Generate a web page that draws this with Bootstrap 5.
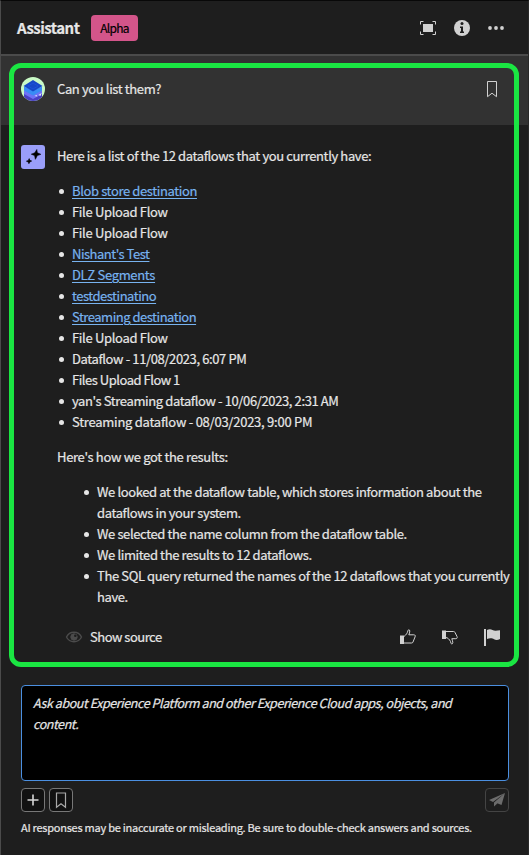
<!DOCTYPE html>
<html lang="en" data-bs-theme="dark">
<head>
<meta charset="utf-8">
<meta name="viewport" content="width=device-width, initial-scale=1">
<title>Assistant</title>
<link href="https://cdn.jsdelivr.net/npm/bootstrap@5.3.0/dist/css/bootstrap.min.css" rel="stylesheet">
<style>
body{background:#1e1e1e;color:#e6e6e6;font:13px/21px "Noto Sans CJK SC","Noto Sans",sans-serif;letter-spacing:-.38px;-webkit-text-stroke:.2px;overflow:hidden}
.panel{height:855px;border-left:1px solid #4b4b4b;border-top:1px solid #080808;border-right:1px solid #292929}
.topbar{height:55px;border-bottom:2px solid #4b4b4b;padding:0 23px 0 16px}
.title{font-size:15px;font-weight:700;letter-spacing:-.52px;width:74px}
.alpha{width:47px;height:26px;border-radius:4px;background:#d3558a;color:#000;font-size:12px;letter-spacing:-.75px}
.ask{height:69px;background:#323232;padding:21px 30px 0 20px}
.ask-text{padding-top:1px}
.reply{padding:20px 0 0 20px;height:493px}
.bot{width:24px;height:24px;border-radius:3px;background:#9a9ef9}
.ic{fill:#d1d1d1;display:block}
.frame{left:8px;top:62px;width:510px;height:604px;border:5px solid #1ae642;border-radius:12px;pointer-events:none}
.items,.steps{list-style:none}
.items li::before,.steps li::before{content:"";display:inline-block;width:5px;height:5px;border-radius:50%;background:#e6e6e6;margin:0 8px 2px -13px}
.items{padding-left:15px;margin:14px 0}
.steps{padding-left:40px;margin:14px 0 0}
.items a{color:#78b3f0;text-decoration-thickness:1px;text-underline-offset:2px}
.tight{letter-spacing:-.48px}
.loose{letter-spacing:-.32px}
.looser{letter-spacing:-.25px}
.actions{margin:19px 27px 0 8px}
.show-source{letter-spacing:-.5px;padding-left:7px}
.prompt-box{margin:67px 19px 0 20px;height:96px;background:#000;border:1px solid #4b8fe0;border-radius:4px;padding:6px 11px;font-size:12.5px;font-style:italic;letter-spacing:-.42px}
.tools{margin:7px 19px 0 20px;gap:4px}
.tool{width:24px;height:24px;border:1px solid #777;border-radius:4px;background:#111}
.tool.off{border-color:#444;background:#1e1e1e}
.note{font-size:11px;line-height:16px;margin:7px 0 0 20px;letter-spacing:-.25px}
</style>
</head>
<body>
<main class="panel position-relative">
<header class="topbar d-flex align-items-center">
<span class="title text-nowrap">Assistant</span><span class="alpha d-flex align-items-center justify-content-center">Alpha</span>
<div class="ms-auto d-flex align-items-center gap-3">
<svg class="ic" width="18" height="18" viewBox="0 0 18 18"><path d="M4 5h10v8H4z"/><path d="M1.500 5.500v-3h3m9 0h3v3m0 7v3h-3m-9 0h-3v-3" fill="none" stroke="#d1d1d1"/></svg>
<svg class="ic" width="18" height="18" viewBox="0 0 18 18"><circle cx="9" cy="9" r="8"/><circle cx="9" cy="4.600" r="1.500" fill="#1e1e1e"/><path d="M7 7.500h3v5h1V14H7v-1.500h1V9H7z" fill="#1e1e1e"/></svg>
<svg class="ic" width="18" height="18" viewBox="0 0 18 18"><circle cx="3" cy="9" r="1.900"/><circle cx="9" cy="9" r="1.900"/><circle cx="15" cy="9" r="1.900"/></svg>
</div>
</header>
<section class="ask d-flex align-items-start">
<svg width="24" height="24" viewBox="0 0 24 24"><defs><clipPath id="av"><circle cx="12" cy="12" r="12"/></clipPath></defs><g clip-path="url(#av)"><path fill="#c9fac6" d="M0 0h24v24H0z"/><path fill="#4a3fc4" d="M3 14h18v6l-3 4H6l-3-4z"/><path fill="#6e72f6" d="M3 13l9 4 9-4v4l-9 5-9-5z"/><path fill="#388cf5" d="M3 9.500l9 4 9-4v4l-9 5-9-5z"/><path fill="#1648c8" d="M12 3l9.500 6L12 14.500 2.500 9z"/><path fill="none" stroke="#1c58df" stroke-width=".7" d="M7 9l5-3 5 3-5 3z"/><path fill="#e1e9ff" d="M13.500 19l2-1 1 1.500zm4-1 3-2-1 3z"/></g></svg>
<span class="ask-text text-nowrap ms-2 ps-1"><span class="d-block">Can you list them?</span></span>
<svg class="ic ms-auto mt-1" width="12" height="18" viewBox="0 0 12 18"><path d="M1.500.5h9v15.200L6 12.200l-4.500 3.500z" fill="none" stroke="#d1d1d1"/></svg>
</section>
<section class="reply d-flex align-items-start">
<span class="bot flex-shrink-0"><svg class="d-block" width="24" height="24" viewBox="0 0 24 24"><path stroke="#000" stroke-width=".6" stroke-linejoin="round" d="M15.800 4.500l.5 3.300 3.500 1.500-3.500 1.300-1.900 3.700-.8-3.800-3.300-1.300 3.600-1.400zM8.200 13.600l.6 1.700 1.900.7-1.800.9-1 1.800-.7-1.800-1.800-.7 1.900-.8z"/></svg></span>
<div class="ms-2 ps-1 flex-grow-1 text-nowrap">
<div>Here is a list of the 12 dataflows that you currently have:</div>
<ul class="items">
<li><a href="#">Blob store destination</a></li>
<li class="loose">File Upload Flow</li>
<li class="loose">File Upload Flow</li>
<li class="tight"><a href="#">Nishant's Test</a></li>
<li class="loose"><a href="#">DLZ Segments</a></li>
<li class="tight"><a href="#">testdestinatino</a></li>
<li class="tight"><a href="#">Streaming destination</a></li>
<li class="loose">File Upload Flow</li>
<li>Dataflow - 11/08/2023, 6:07 PM</li>
<li class="tight">Files Upload Flow 1</li>
<li>yan's Streaming dataflow - 10/06/2023, 2:31 AM</li>
<li class="looser">Streaming dataflow - 08/03/2023, 9:00 PM</li>
</ul>
<div class="loose">Here's how we got the results:</div>
<ul class="steps">
<li>We looked at the dataflow table, which stores information about the<br>dataflows in your system.</li>
<li>We selected the name column from the dataflow table.</li>
<li>We limited the results to 12 dataflows.</li>
<li>The SQL query returned the names of the 12 dataflows that you currently<br>have.</li>
</ul>
<div class="actions d-flex align-items-center">
<svg width="18" height="18" viewBox="0 0 18 18" fill="none" stroke="#4b4b4b"><path d="M1.500 9C4.500 2.700 13.500 2.700 16.500 9 13.500 15.300 4.500 15.300 1.500 9z" stroke-width="1.400"/><circle cx="9" cy="9" r="3.200" fill="#4b4b4b"/><circle cx="10.300" cy="7.700" r="1.300" fill="#1e1e1e" stroke="none"/></svg>
<span class="show-source">Show source</span>
<div class="ms-auto d-flex" style="gap:24px">
<svg class="ic" width="18" height="18" viewBox="0 0 18 18"><path d="M1 7.500h4V16H1z"/><path d="M5 8.500c2-1.500 3.500-3.500 4-6 .3-1.200 1.800-.9 1.800.5 0 1.500-.5 2.500-1 3.800h5c1.500 0 1.700 1 1.200 2.200l-2 5c-.3.800-.7 1-1.500 1H5" fill="none" stroke="#d1d1d1"/></svg>
<svg class="ic" width="18" height="18" viewBox="0 0 18 18"><path d="M1 2.500h4V11H1z"/><path d="M5 3.500h7.500c.8 0 1.200.3 1.500 1l2 4c.5 1.200.2 2.200-1.200 2.200h-4c.5 1.500 1 2.500 1 4 0 1.400-1.500 1.700-1.800.5-.5-2.500-2-4.300-4-5.500H5" fill="none" stroke="#d1d1d1"/></svg>
<svg class="ic" width="18" height="18" viewBox="0 0 18 18"><path d="M1 1h2v17H1zM4 2c2-1.200 4-1 5.500 0S13 3 17 2.300V11c-2.500 1.500-4.500 1.200-6 .2S6.500 10 4 11z"/></svg>
</div>
</div>
</div>
</section>
<div class="prompt-box text-nowrap">Ask about Experience Platform and other Experience Cloud apps, objects, and<br>content.</div>
<div class="tools d-flex">
<span class="tool d-flex align-items-center justify-content-center"><svg width="12" height="12" viewBox="0 0 12 12"><path d="M6 .5v11M.5 6h11" stroke="#d6d6d6" stroke-width="1.600"/></svg></span>
<span class="tool d-flex align-items-center justify-content-center"><svg width="12" height="18" viewBox="0 0 12 18"><path d="M1.500 2h9v14.200L6 12.700l-4.500 3.500z" fill="none" stroke="#a8a8a8" stroke-width="1.200"/></svg></span>
<span class="tool off ms-auto d-flex align-items-center justify-content-center"><svg width="18" height="18" viewBox="0 0 18 18" fill="#6c6c6c"><path d="M17 2 1 9l4 2zM17 2 6 11.500v4l2.500-2.300zM17 2l-9 9.800 5.500 2.200z"/></svg></span>
</div>
<div class="note text-nowrap">AI responses may be inaccurate or misleading. Be sure to double-check answers and sources.</div>
<div class="frame position-absolute"></div>
</main>
</body>
</html>
